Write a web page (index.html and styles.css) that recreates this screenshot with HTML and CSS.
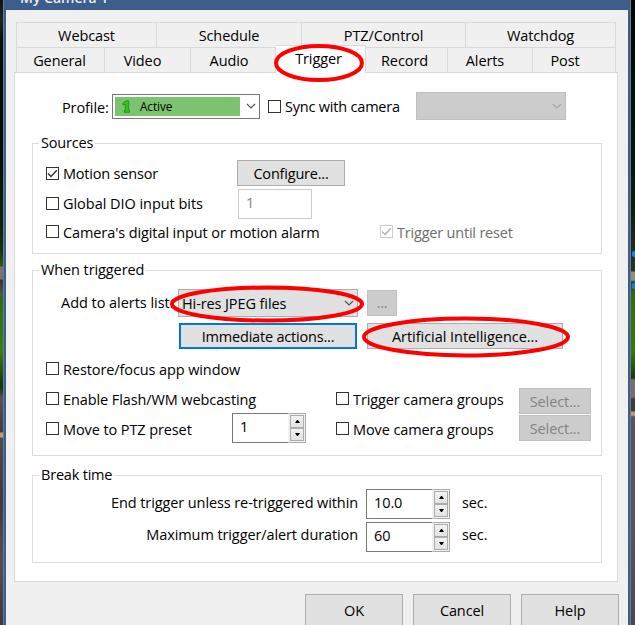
FILE: index.html
```html
<!DOCTYPE html>
<html lang="en">
<head>
<meta charset="utf-8">
<title>My Camera 1</title>
<link rel="stylesheet" href="styles.css">
</head>
<body>
<svg width="0" height="0" class="defs">
  <symbol id="chev" viewBox="0 0 10 6"><path d="M1 1l4 4 4-4" fill="none" stroke="currentColor" stroke-width="1.1"/></symbol>
  <symbol id="tick" viewBox="0 0 11 11"><path d="M1 5.5l3 3L9.8 2.3" fill="none" stroke="currentColor" stroke-width="1.4"/></symbol>
  <symbol id="up" viewBox="0 0 5 3"><path d="M0 3L2 0h1l2 3z"/></symbol>
  <symbol id="down" viewBox="0 0 5 3"><path d="M0 0l2 3h1l2-3z"/></symbol>
</svg>
<div class="desktop left-edge"></div>
<div class="window">
  <header class="titlebar"><span>My Camera 1</span></header>
  <main class="body">
    <nav class="tabs top">
      <span class="tab">Webcast</span><span class="tab">Schedule</span><span class="tab">PTZ/Control</span><span class="tab">Watchdog</span>
    </nav>
    <nav class="tabs bottom">
      <span class="tab">General</span><span class="tab">Video</span><span class="tab">Audio</span><span class="tab active">Trigger<svg class="ring ring-tab" viewBox="0 0 90 38"><ellipse cx="45" cy="19" rx="43" ry="17"/></svg></span><span class="tab">Record</span><span class="tab">Alerts</span><span class="tab">Post</span>
    </nav>
    <section class="pane">
      <div class="profile">
        <span>Profile:</span>
        <div class="combo profile-combo"><div class="fill"><svg class="one" viewBox="0 0 8 13"><path d="M.7 3.2L4.3.8h2.4v9.5h.8v2H2.3v-2h1V4.2L1.2 5z"/></svg>Active</div><svg class="chev"><use href="#chev"/></svg></div>
        <label class="check"><i class="box"></i><span class="tight">Sync with camera</span></label>
        <div class="combo off sync-combo"><svg class="chev"><use href="#chev"/></svg></div>
      </div>

      <fieldset class="group sources">
        <legend class="tight">Sources</legend>
        <div class="row s1"><label class="check"><i class="box"><svg><use href="#tick"/></svg></i><span class="tight">Motion sensor</span></label><button class="btn"><span class="tight">Configure...</span></button></div>
        <div class="row s2"><label class="check"><i class="box"></i><span class="wide">Global DIO input bits</span></label><div class="field">1</div></div>
        <div class="row s3"><label class="check"><i class="box"></i><span>Camera's digital input or motion alarm</span></label><label class="check muted"><i class="box"><svg><use href="#tick"/></svg></i><span class="tight">Trigger until reset</span></label></div>
      </fieldset>

      <fieldset class="group triggered">
        <legend>When triggered</legend>
        <div class="row w1"><span class="wide">Add to alerts list:</span><div class="combo grey"><span>Hi-res JPEG files</span><svg class="chev"><use href="#chev"/></svg><svg class="ring ring-combo" viewBox="0 0 194 38"><ellipse cx="97" cy="19" rx="95" ry="16.5"/></svg></div><button class="btn off dots">...</button></div>
        <div class="row w2"><button class="btn focus"><span class="tight">Immediate actions...</span></button><div class="btn ai"><span class="wide">Artificial Intelligence...</span><svg class="ring ring-ai" viewBox="0 0 208 42"><ellipse cx="104" cy="21" rx="102" ry="18.5"/></svg></div></div>
        <div class="row w3"><label class="check"><i class="box"></i><span>Restore/focus app window</span></label></div>
        <div class="options">
          <div class="left">
            <label class="check"><i class="box"></i><span>Enable Flash/WM webcasting</span></label>
            <div class="preset"><label class="check"><i class="box"></i><span>Move to PTZ preset</span></label><div class="spin"><span>1</span><div class="arrows"><b><svg><use href="#up"/></svg></b><b><svg><use href="#down"/></svg></b></div></div></div>
          </div>
          <div class="mid">
            <label class="check"><i class="box"></i><span>Trigger camera groups</span></label>
            <label class="check"><i class="box"></i><span>Move camera groups</span></label>
          </div>
          <div class="right"><button class="btn off"><span>Select...</span></button><button class="btn off"><span>Select...</span></button></div>
        </div>
      </fieldset>

      <fieldset class="group break">
        <legend class="tight">Break time</legend>
        <div class="time"><span>End trigger unless re-triggered within</span><div class="spin"><span>10.0</span><div class="arrows"><b><svg><use href="#up"/></svg></b><b><svg><use href="#down"/></svg></b></div></div><span>sec.</span></div>
        <div class="time"><span>Maximum trigger/alert duration</span><div class="spin"><span>60</span><div class="arrows"><b><svg><use href="#up"/></svg></b><b><svg><use href="#down"/></svg></b></div></div><span>sec.</span></div>
      </fieldset>
    </section>
    <footer class="actions"><button class="btn">OK</button><button class="btn">Cancel</button><button class="btn">Help</button></footer>
  </main>
</div>
<div class="desktop right-edge"></div>
</body>
</html>
```
FILE: styles.css
```css
* { box-sizing: border-box; }
body {
  margin: 0; width: 635px; height: 625px; overflow: hidden;
  display: grid; grid-template-columns: 3px 628px 4px;
  font: 14.5px/20px "Open Sans", "Noto Sans", sans-serif; color: #000; letter-spacing: -.1px;
}
.tight { letter-spacing: -.2px; }
.wide { letter-spacing: -.04px; }
.defs { position: absolute; }
.left-edge { background: linear-gradient(#101510 0, #20241f 20px, #0a0e08 40px, #060b04 150px, #0f2208 225px, #17300b 250px, #2d5a12 266px, #77736a 267px, #77736a 279px, #333532 280px, #55554f 295px, #2f6a12 297px, #39800f 350px, #16330a 387px, #555 398px, #3c3c3c 432px, #c79a72 433px, #c79a72 437px, #4c4c4e 438px, #3b3b3d 500px, #505052 560px, #3a3a3c); }
.right-edge { background:
  radial-gradient(circle at 4px 254px, #1a78f0 3px, transparent 3.6px),
  radial-gradient(circle at 4px 286px, #1a78f0 3px, transparent 3.6px),
  linear-gradient(#020301 0, #071004 100px, #0c1a06 200px, #20301c 255px, #2a3325 271px, #918e85 272px, #918e85 280px, #2b4a20 282px, #326b10 295px, #39780f 350px, #1b3710 378px, #77706a 380px, #77706a 397px, #413b38 399px, #413b38 411px, #c79a72 412px, #c79a72 415px, #55555a 417px, #57575b 520px, #49494b); }
.window { height: 625px; border: solid #687a94; border-width: 0 1px; background: #3d5e8a; padding: 0 2px; }
.titlebar { height: 10px; overflow: hidden; color: #e8edf4; font-size: 14px; font-weight: 600; letter-spacing: 0; padding-left: 14px; }
.titlebar span { display: block; margin-top: -12px; }
.body { height: 615px; background: #f0f0f0; padding: 12px 10px 0 8px; }
.tabs { display: grid; margin: 0 2px; height: 25px; border-left: 1px solid #d9d9d9; }
.tabs.top { grid-template-columns: 140px 145px 164px 150px; }
.tabs.bottom { grid-template-columns: 88px 86px 85px 90px 82px 85px 83px; }
.tab { border: solid #d9d9d9; border-width: 1px 1px 0 0; text-align: center; padding-top: 3px; height: 25px; white-space: nowrap; }
.tab.active { position: relative; background: #fff; height: 28px; margin-top: -2px; z-index: 1; padding-right: 4px; }
.tabs.bottom .tab:nth-child(1) { padding-right: 2px; }
.tabs.bottom .tab:nth-child(2) { padding-right: 10px; }
.tabs.bottom .tab:nth-child(3) { padding-right: 8px; }
.tabs.bottom .tab:nth-child(5) { padding-right: 4px; }
.tabs.bottom .tab:nth-child(6) { padding-right: 10px; }
.tabs.bottom .tab:last-child { padding-right: 18px; }
.pane { height: 510px; background: #fff; border: 1px solid #d9d9d9; padding: 19px 15px 0 17px; }
.profile { display: grid; grid-template-columns: 50px 148px 1fr 150px; height: 28px; align-items: center; padding: 0 36px 0 30px; }
.profile > span { padding-top: 3px; }
.combo { position: relative; display: flex; align-items: center; border: 1px solid #adadad; background: #e1e1e1; height: 28px; padding-right: 3px; }
.combo > span { padding-top: 2px; }
.chev { width: 10px; height: 6px; margin-left: auto; color: #505050; }
.profile-combo { height: 25px; border-color: #777; background: #fff; padding: 2px 3px 2px 2px; }
.fill { display: flex; align-items: center; gap: 10px; width: 125px; height: 19px; background: #7cc36f; padding-left: 7px; font-size: 11.8px; }
.one { width: 8px; height: 13px; fill: #2fc41c; stroke: #24891b; stroke-width: .8; }
.profile .check { padding-left: 8px; }
.sync-combo .chev { color: #a5a5a5; }
.off { background: #ccc !important; border-color: #bfbfbf !important; color: #838383; }
.check { display: flex; align-items: center; gap: 4px; height: 20px; white-space: nowrap; }
.check span { padding-top: 1px; }
.box { display: block; width: 13px; height: 13px; border: 1px solid #333; background: #fff; flex: none; }
.box svg { display: block; width: 11px; height: 11px; color: #333; }
.muted { color: #6d6d6d; }
.muted .box { border-color: #ccc; }
.muted .box svg { color: #b0b0b0; }
.group { margin: 0; min-width: 0; border: 1px solid #dcdcdc; padding: 0; width: 570px; }
legend { margin-left: 6px; padding: 0 2px; height: 20px; }
.btn { display: flex; align-items: center; justify-content: center; border: 1px solid #adadad; background: #e1e1e1; padding: 0; margin: 0; font: inherit; letter-spacing: inherit; color: #000; height: 26px; white-space: nowrap; }
.btn > span { padding-top: 1px; }
.btn.off { color: #838383; }
.row { display: flex; align-items: center; padding-left: 13px; }
.sources { margin-top: 13px; height: 121px; }
.s1, .s2 { display: grid; grid-template-columns: 191px 108px; }
.s1 { height: 26px; margin-top: 7px; }
.s2 { height: 30px; margin-top: 3px; }
.s2 .check { margin-top: -2px; }
.s2 .field { margin-left: 1px; width: 74px; }
.field { border: 1px solid #ccc; height: 30px; padding: 3px 7px; color: #838383; }
.s3 { display: grid; grid-template-columns: 334px 1fr; height: 20px; margin-top: 2px; }
.s3 .check span { padding-top: 3px; }
.triggered { margin-top: 6px; height: 196px; }
.w1 { height: 28px; margin-top: 9px; padding-left: 28px; }
.w1 > span { width: 117px; white-space: nowrap; }
.w1 .combo { width: 180px; padding-left: 3px; }
.dots { width: 30px; margin-left: 9px; }
.w2 { height: 26px; margin-top: 6px; padding-left: 146px; gap: 10px; }
.focus { width: 178px; border: 2px solid #0078d7; }
.ai { position: relative; width: 196px; padding-right: 0; }
.w3 { height: 20px; margin-top: 9px; }
.w3 .check span { padding-top: 3px; }
.options { display: grid; grid-template-columns: 290px 183px 72px; padding-left: 13px; margin-top: 10px; }
.left, .mid { display: grid; grid-template-rows: 20px 20px; row-gap: 10px; }
.options .check span { padding-top: 3px; }
.preset { display: grid; grid-template-columns: 186px 74px; grid-template-rows: 20px; }
.preset .spin { align-self: center; }
.right { display: grid; gap: 1px; }
.spin { display: flex; height: 30px; border: 1px solid #7a7a7a; background: #fff; padding-left: 7px; justify-content: space-between; }
.spin > span { padding-top: 3px; }
.arrows { width: 18px; margin: -1px; border: 1px solid #aaa; border-left-color: #f0f0f0; background: #f0f0f0; display: grid; grid-template-rows: 1fr 1fr; padding: 1px; }
.arrows b { display: grid; place-items: center; border: 1px solid #acacac; background: linear-gradient(#f2f2f2, #e3e3e3); }
.arrows svg { width: 5px; height: 3px; }
.break { margin-top: 9px; height: 98px; }
.time { display: grid; grid-template-columns: 325px 84px 1fr; column-gap: 8px; height: 33px; align-items: center; }
.break legend + .time { margin-top: 2px; }
.time > span { padding-bottom: 2px; }
.time:last-child > span { padding-bottom: 4px; }
.time > span:first-child { text-align: right; }
.time > span:last-child { padding-left: 4px; }
.actions { display: grid; grid-template-columns: repeat(3, 98px); gap: 10px; justify-content: end; margin: 12px -1px 0 0; }
.actions .btn { height: 34px; }
.ring { position: absolute; overflow: visible; fill: none; stroke: #f00; stroke-width: 4; z-index: 2; }
.ring-tab { width: 90px; height: 38px; left: -2px; top: -2px; }
.ring-combo { width: 194px; height: 38px; left: -9px; top: -5px; }
.ring-ai { width: 208px; height: 42px; left: -6px; top: -8px; }
```
